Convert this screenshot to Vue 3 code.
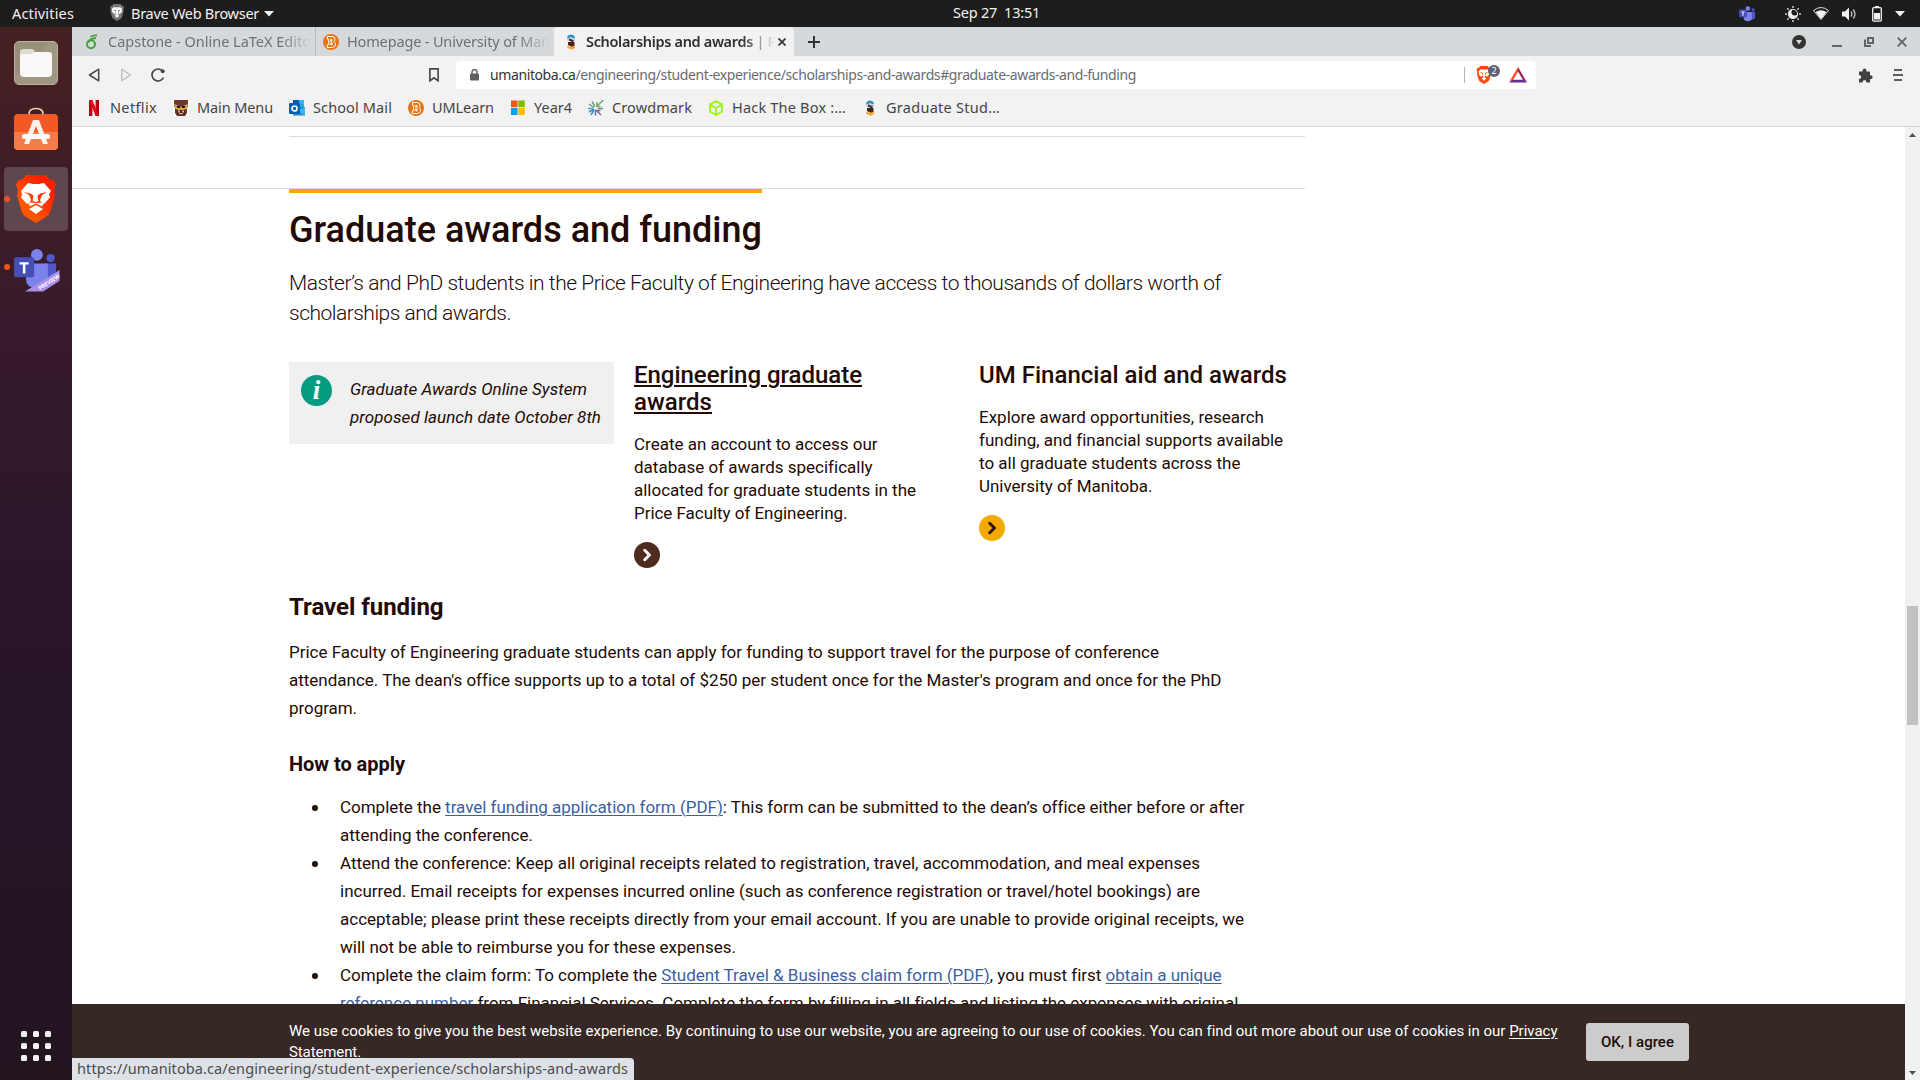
<script setup>
// Spreads a line's letters so that it takes up the given width in pixels.
const vFit = {
  mounted(el, { value }) {
    const range = document.createRange()
    range.selectNodeContents(el)
    const natural = range.getBoundingClientRect().width
    const count = el.textContent.length
    el.style.letterSpacing = `${(value - natural) / count}px`
  },
}

const bookmarks = [
  { icon: 'netflix', label: 'Netflix', width: 47, gap: 16 },
  { icon: 'bison', label: 'Main Menu', width: 76, gap: 16 },
  { icon: 'outlook', label: 'School Mail', width: 79, gap: 16 },
  { icon: 'learn', label: 'UMLearn', width: 62, gap: 16 },
  { icon: 'windows', label: 'Year4', width: 38, gap: 16 },
  { icon: 'crowdmark', label: 'Crowdmark', width: 80, gap: 16 },
  { icon: 'htb', label: 'Hack The Box :…', width: 114, gap: 16 },
  { icon: 'um', label: 'Graduate Stud…', width: 114, gap: 0 },
]

const steps = [
  [
    { w: 903, parts: ['Complete the ', { a: 'travel funding application form (PDF)' }, ': This form can be submitted to the dean’s office either before or after'] },
    { w: 193, parts: ['attending the conference.'] },
  ],
  [
    { w: 860, parts: ['Attend the conference: Keep all original receipts related to registration, travel, accommodation, and meal expenses'] },
    { w: 860, parts: ['incurred. Email receipts for expenses incurred online (such as conference registration or travel/hotel bookings) are'] },
    { w: 904, parts: ['acceptable; please print these receipts directly from your email account. If you are unable to provide original receipts, we'] },
    { w: 396, parts: ['will not be able to reimburse you for these expenses.'] },
  ],
  [
    { w: 881, parts: ['Complete the claim form: To complete the ', { a: 'Student Travel & Business claim form (PDF)' }, ', you must first ', { a: 'obtain a unique' }] },
    { w: 897, parts: [{ a: 'reference number' }, ' from Financial Services. Complete the form by filling in all fields and listing the expenses with original'] },
  ],
]

const cards = [
  {
    title: [['Engineering graduate', 228], ['awards', 78]],
    active: true,
    text: [
      ['Create an account to access our', 243.500],
      ['database of awards specifically', 238],
      ['allocated for graduate students in the', 282],
      ['Price Faculty of Engineering.', 213.500],
    ],
  },
  {
    title: [['UM Financial aid and awards', 308]],
    active: false,
    text: [
      ['Explore award opportunities, research', 285],
      ['funding, and financial supports available', 303.500],
      ['to all graduate students across the', 261.500],
      ['University of Manitoba.', 173.500],
    ],
  },
]
</script>

<template>
  <div class="desktop">
    <svg class="defs" width="0" height="0">
      <symbol id="netflix" viewBox="0 0 16 16">
        <path d="M3 0h3.400v16H3zM9.600 0H13v16H9.600z" fill="#b1060f" />
        <path d="M3 0h3.400L13 16H9.600z" fill="#e50914" />
      </symbol>
      <symbol id="bison" viewBox="0 0 16 16">
        <path d="M0 0h16v16H0z" fill="#fff" />
        <path d="M1 0h14v6l-1 2v5l-2 3H4l-2-3V8L1 6z" fill="#6b3a2c" />
        <path d="M1 4l4 1.500 3 1.500 3-1.500L15 4l-1 4.500-3 1.500H5L2 8.500z" fill="#d9a648" />
        <path d="M3.500 6h3.500v2H4.500zM12.500 6H9v2h2.500z" fill="#2c1512" />
        <path d="M4 10h8v4l-2 1.500H6L4 14z" fill="#4c2018" />
        <path d="M5 10.500h2v2H5zM9 10.500h2v2H9zM6 13h4v1.200H6z" fill="#d2b98a" />
      </symbol>
      <symbol id="outlook" viewBox="0 0 16 16">
        <path d="M4 0h11v8H4z" fill="#28a8ea" />
        <path d="M4 0h6v4H4z" fill="#0358a7" /><path d="M10 0h5v4h-5z" fill="#35b8f1" />
        <path d="M4 7h12v8.500H4z" fill="#1490df" /><path d="M16 7v8.500L8 11z" fill="#35b8f1" />
        <rect y="3" width="11" height="11" rx="1" fill="#0a5fae" />
        <circle cx="5.500" cy="8.500" r="2.500" fill="none" stroke="#fff" stroke-width="1.700" />
      </symbol>
      <symbol id="learn" viewBox="0 0 16 16">
        <circle cx="8" cy="8" r="8" fill="#e87511" />
        <path d="M4.500 2.500h4.700q2.800 0 2.800 2.700 0 1.500-1 2.200 1.500.8 1.500 2.900Q12.500 13.500 9.300 13.500H4.300v-2.700H5.700V5.300H4.500zM7.700 5.300v2h1.200v-2zM7.700 8.900v2h1.500v-2z" fill="none" stroke="#fff" stroke-width="1" />
      </symbol>
      <symbol id="windows" viewBox="0 0 16 16">
        <path d="M1 .5h6.500v6.700H1z" fill="#f65314" /><path d="M8.200.5h6.600v6.700H8.200z" fill="#7cbb00" />
        <path d="M1 8h6.500v7H1z" fill="#00a1f1" /><path d="M8.200 8h6.600v7H8.200z" fill="#ffbb00" />
      </symbol>
      <symbol id="crowdmark" viewBox="0 0 16 16">
        <g fill="none" stroke-width="1.500">
          <path d="M8.500 6.500L15.500 0M9 2v4.500h3.500" stroke="#76ad5b" />
          <path d="M4 1.500l3 5M1 4l5 3.500M0 8.500h5" stroke="#6c9c96" />
          <path d="M1 12l5-3M3 15l3-5" stroke="#2e96c0" />
          <path d="M7.500 15.500v-5h5M9 11l4 4" stroke="#7961a6" />
          <path d="M10 8.500h5" stroke="#6a8c8a" />
        </g>
      </symbol>
      <symbol id="htb" viewBox="0 0 16 16">
        <path d="M8 1l6 3.400v7.200L8 15l-6-3.400V4.400zM2 4.500L8 8l6-3.500M8 8v7" fill="none" stroke="#a4f120" stroke-width="1.900" stroke-linejoin="round" />
      </symbol>
      <symbol id="um" viewBox="0 0 16 16">
        <path d="M4 3Q5 .5 8 .5T12 3L11 5H5z" fill="#2a8fc7" />
        <path d="M4 4.500L8 3l4 1.500v2l-4 1-4-1z" fill="#b8cfdc" /><path d="M6 4.500l5 2-1 2-4-2z" fill="#4b2a20" />
        <path d="M5 8h6.500v4L9 13l-4-2z" fill="#432419" /><path d="M4 11.500l4 1.500 4-1.500v2.500l-3 1.800L4.500 14z" fill="#f5a52d" />
      </symbol>
      <symbol id="teams" viewBox="0 0 48 46">
        <circle cx="40" cy="11" r="4.500" fill="#5059c9" /><circle cx="25" cy="7.500" r="6.500" fill="#7b83eb" />
        <path d="M33 17h13v14q0 8-8 8h-5z" fill="#5059c9" /><path d="M13 17h24v17q0 10-12 10T13 34z" fill="#7b83eb" />
        <rect y="10" width="22" height="22" rx="2" fill="#464eb8" />
        <path d="M6 15.500h10v2.500h-3.600v10H9.600V18H6z" fill="#fff" />
      </symbol>
      <symbol id="lion" viewBox="0 0 40 48">
        <path d="M10 0h20l4 5 3-.5 3 5-2 6 1 5-5 17q-1 3-4 4.500L20 48l-10-6q-3-1.500-4-4.500l-5-17 1-5-2-6 3-5 3 .5z" fill="currentColor" />
        <path d="M5 15l6-6.500 5 1 4-.5 4 .5 5-1 6 6.500-1.500 4 .5 3-6 6.500-2 1L20 31l-6-1.500-2-1L6 22l.5-3z" fill="#fff" />
        <path d="M8 16l8 1 1.500 2v5l-2.500 2.500 5 3.500 5-3.500-2.500-2.500v-5l1.500-2 8-1-6 3.500-1.500-.5v6l3.500 4-6-.5h-4l-6 .5 3.500-4v-6l-1.500.5z" fill="currentColor" />
        <path d="M13.500 33.500L20 30l6.500 3.500L20 39z" fill="#fff" />
        <path d="M18 18h4v5l1.500 3L20 28l-3.500-2 1.500-3z" fill="#fff" />
      </symbol>
      <linearGradient id="flame" x1="0" x2="1" y1="1" y2="0"><stop offset=".3" stop-color="#ff5500" /><stop offset=".75" stop-color="#ff2000" /></linearGradient>
    </svg>

    <header class="topbar">
      <span class="activities" v-fit="62">Activities</span>
      <svg class="top-lion" width="14" height="17"><use href="#lion" /></svg>
      <span class="app-name" v-fit="128">Brave Web Browser</span>
      <svg class="top-caret" width="10" height="6"><path d="M0 0h10L5 5.500z" fill="#f2f2f2" /></svg>
      <span class="clock" v-fit="87">Sep 27&nbsp; 13:51</span>
      <div class="tray">
        <svg class="t-teams" width="17" height="16"><use href="#teams" /></svg>
        <svg class="t-sun" width="16" height="16" viewBox="0 0 16 16">
          <path d="M8 0v2M8 14v2M0 8h2M14 8h2M2.300 2.300l1.400 1.400M12.300 12.300l1.400 1.400M2.300 13.700l1.400-1.400M12.300 3.700l1.400-1.400" stroke="#d0d0d0" stroke-width="1.500" />
          <circle cx="8" cy="8" r="5" fill="#f2f2f2" /><circle cx="9.800" cy="6.300" r="3.300" fill="#1d1d1d" />
          <circle cx="8" cy="8" r="4.600" fill="none" stroke="#e0e0e0" />
        </svg>
        <svg class="t-wifi" width="16" height="13" viewBox="0 0 16 13">
          <path d="M.5 3.500Q8-2.500 15.500 3.500L8 12.500z" fill="none" stroke="#f2f2f2" stroke-width=".9" />
          <path d="M2.500 5Q8 1.500 13.500 5L8 12z" fill="#f2f2f2" />
        </svg>
        <svg class="t-vol" width="15" height="14" viewBox="0 0 15 14">
          <path d="M0 4.500h3L7 .5v13L3 9.500H0z" fill="#f2f2f2" />
          <path d="M9 4.500q1.800 2.500 0 5M11.300 2.500q3.400 4.500 0 9" fill="none" stroke="#c8c8c8" stroke-width="1.300" />
        </svg>
        <svg class="t-bat" width="10" height="16" viewBox="0 0 10 16">
          <path d="M3 0h4v2H3z" fill="#f2f2f2" /><rect x=".7" y="1.700" width="8.600" height="13.400" rx="1" fill="none" stroke="#f2f2f2" stroke-width="1.300" />
          <path d="M2 7h6v6.500H2z" fill="#f2f2f2" />
        </svg>
        <svg width="10" height="6"><path d="M0 0h10L5 5.500z" fill="#f2f2f2" /></svg>
      </div>
    </header>

    <div class="workspace">
      <nav class="dock">
        <div class="dock-item">
          <svg width="44" height="44" viewBox="0 0 44 44">
            <rect x=".5" y=".5" width="43" height="43" rx="4.500" fill="#99907a" stroke="#b9b3a3" />
            <path d="M1 36L36 1h5q2 0 2 2v38q0 2-2 2H3q-2 0-2-2z" fill="#a29a86" opacity=".7" />
            <path d="M6 11q0-3 3-3h9q2 0 3 3h12v8H6z" fill="#dedacd" />
            <path d="M6 15q0-2 2-2h9l4-2h14q3 0 3 3v18q0 4-4 4H10q-4 0-4-4z" fill="#faf9f7" />
          </svg>
        </div>
        <div class="dock-item">
          <svg class="software" width="44" height="44" viewBox="0 0 44 44">
            <path d="M15 10V7q0-5.500 7-5.500T29 7v3" fill="none" stroke="#f2d7a6" stroke-width="1.700" />
            <rect y="7" width="44" height="36" rx="4" fill="#f15a24" /><path d="M0 25h44v14q0 4-4 4H4q-4 0-4-4z" fill="#f47b4c" />
            <path d="M19 13h6l9 24h-5l-7-18-7 18h-5z" fill="#fff1e9" /><rect x="8" y="27" width="28" height="5" rx="2.500" fill="#fff" />
          </svg>
        </div>
        <div class="dock-item current">
          <i class="run-dot"></i>
          <svg class="brave" width="40" height="48" viewBox="0 0 40 48">
            <path d="M10 0h20l4 5 3-.5 3 5-2 6 1 5-5 17q-1 3-4 4.500L20 48l-10-6q-3-1.500-4-4.500l-5-17 1-5-2-6 3-5 3 .5z" fill="url(#flame)" />
            <path d="M12 8l5 1h6l5-1 7 8-2 3.500 1 3-6 6.500-3-2-1-2 2-5 5-3-6.500 1.500-3 2 .8 5.500L20 27l-3.300-1 .8-5.500-3-2L8 17l5 3 2 5-1 2-3 2-6-6.500 1-3L5 16z" fill="#fff" />
            <path d="M13 34l7-4 7 4-7 5z" fill="#fff" />
            <path d="M12.500 27.500L20 28l7.500-.5-.5 3-2 .5-5-2.500-5 2.500-2-.5z" fill="#fff" />
          </svg>
        </div>
        <div class="dock-item">
          <i class="run-dot"></i>
          <svg class="teams-dock" width="46" height="44" viewBox="0 0 46 44">
            <use href="#teams" width="44" height="42" />
            <path d="M11 43.500L45.500 22v11L29 43.500z" fill="#aa8ee6" />
          </svg>
          <span class="preview">PREVIEW</span>
        </div>
        <div class="apps"><i v-for="n in 9" :key="n"></i></div>
      </nav>

      <main class="window">
        <div class="tabs">
          <div class="tab tab-one">
            <svg width="14" height="16" viewBox="0 0 14 16">
              <path d="M12 1.500Q8 1 5.500 2.800M11 4Q5 4.500 3 8.500" fill="none" stroke="#47a141" stroke-width="1.800" />
              <circle cx="6" cy="10.300" r="4" fill="none" stroke="#47a141" stroke-width="2" />
            </svg>
            <div class="tab-label fade"><span v-fit="203">Capstone - Online LaTeX Edito</span></div>
          </div>
          <div class="tab tab-two">
            <svg width="16" height="16"><use href="#learn" /></svg>
            <div class="tab-label fade"><span v-fit="203">Homepage - University of Man</span></div>
          </div>
          <div class="tab tab-active">
            <svg width="16" height="16"><use href="#um" /></svg>
            <div class="tab-label fade-strong"><span v-fit="189">Scholarships and awards | F</span></div>
            <svg class="tab-x" width="8" height="8"><path d="M.5.5l7 7M7.500.5l-7 7" stroke="#333" stroke-width="1.700" /></svg>
          </div>
          <svg class="plus" width="12" height="12"><path d="M6 0v12M0 6h12" stroke="#333" stroke-width="2" /></svg>
          <div class="controls">
            <svg width="14" height="14"><circle cx="7" cy="7" r="7" fill="#333" /><path d="M4 5h6L7 9.500z" fill="#d5d9dc" /></svg>
            <svg class="c-min" width="10" height="14"><path d="M0 11h10" stroke="#606468" stroke-width="2" /></svg>
            <svg class="c-max" width="10" height="14"><path d="M4 3h5v5H4zM1 4.500V11h6" fill="none" stroke="#606468" stroke-width="2" /></svg>
            <svg class="c-close" width="10" height="14"><path d="M.7 2.700l8.600 8.600M9.300 2.700L.7 11.300" stroke="#606468" stroke-width="1.800" /></svg>
          </div>
        </div>

        <div class="toolbar">
          <svg class="back" width="12" height="14"><path d="M10.700 1.200v11.600L1.500 7z" fill="none" stroke="#484848" stroke-width="1.500" stroke-linejoin="round" /></svg>
          <svg class="fwd" width="12" height="14"><path d="M1.800 1.200v11.600L10.500 7z" fill="none" stroke="#bcbcbc" stroke-width="1.300" stroke-linejoin="round" /></svg>
          <svg class="reload" width="14" height="14"><path d="M12.500 9.500A6 6 0 1 1 11.500 3" fill="none" stroke="#484848" stroke-width="1.700" /><circle cx="11.700" cy="3.300" r="2" fill="#484848" /></svg>
          <svg class="mark" width="10" height="14"><path d="M.9.900h8.200v11.900L5 9.800.9 12.800z" fill="none" stroke="#444" stroke-width="1.600" /></svg>
          <div class="address">
            <svg width="9" height="12"><rect y="4.500" width="9" height="7" rx="1" fill="#5c5f63" /><path d="M2 5V3a2.500 2.500 0 0 1 5 0v2" fill="none" stroke="#5c5f63" stroke-width="1.400" /></svg>
            <span class="url" v-fit="646"><b>umanitoba.ca</b>/engineering/student-experience/scholarships-and-awards#graduate-awards-and-funding</span>
            <i class="bar"></i>
            <div class="shield"><svg width="16" height="18"><use href="#lion" /></svg><em>2</em></div>
            <svg class="bat" width="18" height="16" viewBox="0 0 18 16">
              <path d="M9 0L0 15.500 4 13 9 4.500z" fill="#ff4724" /><path d="M9 0l9 15.500-4-2.500-5-8.500z" fill="#9e1f63" /><path d="M0 15.500h18L14 12.800H4z" fill="#662d91" />
            </svg>
          </div>
          <svg class="ext" width="15" height="15" viewBox="0 0 15 15"><path d="M1 3.500h3.500Q4.500.5 6.500.5T8.500 3.500H12v3.800q2.700 0 2.700 2T12 11.300V14.500H8.500q0-2.500-2-2.500t-2 2.500H1V11q2.300 0 2.300-2T1 7z" fill="#404040" /></svg>
          <svg class="menu" width="10" height="12"><path d="M1 1h8M0 6h10M1 11h8" stroke="#5c5c5c" stroke-width="1.800" /></svg>
        </div>

        <div class="bookmarks">
          <div v-for="b in bookmarks" :key="b.label" class="bookmark" :style="{ marginRight: b.gap + 'px' }">
            <svg width="16" height="16"><use :href="'#' + b.icon" /></svg>
            <span :style="{ width: b.width + 'px' }"><span v-fit="b.width">{{ b.label }}</span></span>
          </div>
        </div>

        <div class="viewport">
          <div class="page">
            <div class="rule-top"></div>
            <div class="rule-full"></div>
            <article>
              <h1><span v-fit="473">Graduate awards and funding</span></h1>
              <p class="intro">
                <span class="line" v-fit="932">Master’s and PhD students in the Price Faculty of Engineering have access to thousands of dollars worth of</span>
                <span class="line" v-fit="222">scholarships and awards.</span>
              </p>
              <div class="columns">
                <aside class="notice">
                  <i class="info">i</i>
                  <div>
                    <span class="line" v-fit="237">Graduate Awards Online System</span>
                    <span class="line" v-fit="251">proposed launch date October 8th</span>
                  </div>
                </aside>
                <section v-for="(card, i) in cards" :key="i" class="card" :class="{ active: card.active }">
                  <h3><span v-for="t in card.title" :key="t[0]" class="line" v-fit="t[1]">{{ t[0] }}</span></h3>
                  <p><span v-for="t in card.text" :key="t[0]" class="line" v-fit="t[1]">{{ t[0] }}</span></p>
                  <div class="go"><svg width="26" height="26"><path d="M10.700 8.300l4.800 4.700-4.800 4.700" fill="none" stroke="currentColor" stroke-width="3" stroke-linecap="round" stroke-linejoin="round" /></svg></div>
                </section>
              </div>
              <h2><span v-fit="154.500">Travel funding</span></h2>
              <p class="body">
                <span class="line" v-fit="870">Price Faculty of Engineering graduate students can apply for funding to support travel for the purpose of conference</span>
                <span class="line" v-fit="931">attendance. The dean's office supports up to a total of $250 per student once for the Master's program and once for the PhD</span>
                <span class="line" v-fit="68">program.</span>
              </p>
              <h4><span v-fit="116">How to apply</span></h4>
              <ul>
                <li v-for="(step, s) in steps" :key="s">
                  <span v-for="(l, k) in step" :key="k" class="line" v-fit="l.w"><template v-for="(part, j) in l.parts" :key="j"><a v-if="part.a">{{ part.a }}</a><template v-else>{{ part }}</template></template></span>
                </li>
              </ul>
            </article>
          </div>
          <div class="scrollbar">
            <svg width="7" height="4"><path d="M0 4l3.500-4L7 4z" fill="#505050" /></svg>
            <i class="thumb"></i>
            <svg class="down" width="7" height="4"><path d="M0 0h7L3.500 4z" fill="#505050" /></svg>
          </div>
          <div class="cookies">
            <p>
              <span class="line" v-fit="1268">We use cookies to give you the best website experience. By continuing to use our website, you are agreeing to our use of cookies. You can find out more about our use of cookies in our <u>Privacy</u></span>
              <span class="line" v-fit="72"><u>Statement</u>.</span>
            </p>
            <button><span v-fit="73">OK, I agree</span></button>
          </div>
          <div class="status"><span v-fit="551">https://umanitoba.ca/engineering/student-experience/scholarships-and-awards</span></div>
        </div>
      </main>
    </div>
  </div>
</template>

<style>
body { overflow: hidden; }
</style>

<style scoped>
* { box-sizing: border-box; }
svg { display: block; flex: none; }
.defs { position: absolute; }
.desktop { width: 1920px; height: 1080px; display: flex; flex-direction: column; overflow: hidden; font: 14.5px/20px "Noto Sans", sans-serif; background: #fff; }
.line { display: block; width: max-content; white-space: nowrap; }

.topbar { position: relative; height: 27px; flex: none; display: flex; align-items: center; background: #1d1d1d; color: #f2f2f2; white-space: nowrap; }
.activities, .app-name { padding-bottom: 2px; }
.activities { margin-left: 12px; width: 98px; }
.top-lion { color: #777; margin-right: 7px; margin-top: -2px; }
.top-caret { margin-left: 5px; }
.clock { position: absolute; left: 953px; top: 2px; }
.tray { margin-left: auto; padding-right: 15px; display: flex; align-items: center; }
.t-teams { margin-right: 29px; }
.t-sun { margin-right: 12px; }
.t-wifi { margin-right: 13px; }
.t-vol { margin-right: 15px; }
.t-bat { margin-right: 13px; }

.workspace { flex: 1; display: flex; min-height: 0; }
.dock { width: 72px; flex: none; display: flex; flex-direction: column; align-items: center; padding-top: 4px; background: linear-gradient(#472022, #371a2b 28%, #28152a 60%, #21141f); }
.dock-item { position: relative; width: 64px; height: 64px; margin-bottom: 4px; border-radius: 4px; display: flex; align-items: center; justify-content: center; }
.dock-item.current { background: #5f464f; }
.run-dot { position: absolute; left: 0; top: 29px; width: 6px; height: 6px; border-radius: 50%; background: #e95420; }
.software { margin-top: -5px; }
.teams-dock { margin-left: 2px; margin-top: 5px; }
.preview { position: absolute; left: 29px; top: 43px; width: 32px; font: 700 5.5px/8px "Noto Sans", sans-serif; color: #fff; transform: rotate(-33deg); text-align: center; }
.apps { margin-top: auto; margin-bottom: 19px; display: grid; grid-template-columns: repeat(3, 6px); gap: 6px; }
.apps i { width: 6px; height: 6px; border-radius: 1.5px; background: #f4f2f3; }

.window { flex: 1; display: flex; flex-direction: column; min-width: 0; background: #f2f2f2; }
.tabs { height: 29px; display: flex; align-items: center; background: #d5d9dc; color: #6d7073; }
.tab { display: flex; align-items: center; height: 29px; white-space: nowrap; }
.tab-label { overflow: hidden; padding-bottom: 1px; }
.fade { -webkit-mask-image: linear-gradient(90deg, #000 85%, transparent); }
.fade-strong { -webkit-mask-image: linear-gradient(90deg, #000 82%, transparent); }
.tab-one { width: 244px; padding-left: 13px; gap: 9px; border-right: 1px solid #b6babd; }
.tab-one .tab-label, .tab-two .tab-label { width: 203px; }
.tab-two { width: 238px; padding-left: 7px; gap: 8px; }
.tab-active { width: 240px; padding-left: 9px; background: #f2f2f2; border-radius: 4px 4px 0 0; color: #2e2e2e; font-weight: 600; }
.tab-active .tab-label { width: 189px; margin: 0 3px 0 7px; }
.plus { margin-left: 14px; }
.controls { margin-left: auto; margin-right: 13px; display: flex; align-items: center; }
.c-min { margin-left: 26px; }
.c-max { margin-left: 22px; }
.c-close { margin-left: 23px; }

.toolbar { height: 38px; display: flex; align-items: center; }
.back { margin-left: 16px; }
.fwd { margin-left: 20px; }
.reload { margin-left: 19px; }
.mark { margin-left: 264px; margin-right: 17px; }
.address { width: 1080px; height: 28px; padding-left: 14px; display: flex; align-items: center; border-radius: 4px; background: #fff; color: #696c70; }
.url { margin-left: 11px; white-space: nowrap; font-size: 14px; }
.url b { font-weight: 400; color: #333; }
.bar { width: 1px; height: 16px; margin-left: auto; background: #b3b7bb; }
.shield { position: relative; margin-left: 11px; color: #fb4a0c; width: 33px; }
.shield em { position: absolute; left: 12px; top: -1px; width: 12px; height: 12px; border-radius: 6px; background: #5e6175; color: #fff; font: 9px/12px "Noto Sans", sans-serif; text-align: center; }
.bat { margin-right: 9px; }
.ext { margin-left: 322px; }
.menu { margin-left: 20px; }

.bookmarks { height: 33px; padding: 0 0 5px 14px; border-bottom: 1px solid #d4d4d4; display: flex; align-items: center; color: #454545; }
.bookmark { display: flex; align-items: center; gap: 8px; white-space: nowrap; }
.bookmark > span { display: block; padding-bottom: 1px; }

.viewport { position: relative; flex: 1; display: flex; min-height: 0; background: #fff; font-family: Roboto, sans-serif; color: #230a04; }
.page { flex: 1; overflow: hidden; }
.rule-top { margin: 9px 0 0 217px; width: 1016px; height: 1px; background: #dcdcdc; }
.rule-full { margin-top: 51px; width: 1233px; height: 1px; background: #dcdcdc; }
article { margin-left: 217px; width: 1040px; }
h1, h2, h3, h4, p, ul { margin: 0; }
h1 { width: 473px; padding-top: 16px; border-top: 4px solid #f5a800; font-size: 36px; line-height: 42px; font-weight: 500; white-space: nowrap; }
.intro { margin-top: 17px; font-size: 21px; line-height: 30px; font-weight: 300; }
.columns { margin-top: 34px; display: flex; align-items: flex-start; }
.notice { width: 325px; height: 82px; padding: 13px 0 0 12px; display: flex; background: #f0f0f0; font-size: 17px; line-height: 28px; font-style: italic; }
.info { width: 31px; height: 31px; margin-right: 18px; border-radius: 50%; background: #049b81; color: #fff; font: italic 700 27px/30px "Liberation Serif", serif; text-align: center; }
.card { width: 325px; margin-left: 20px; }
h3 { font-size: 24px; line-height: 27px; font-weight: 500; }
.active h3 .line { text-decoration: underline; text-decoration-thickness: 2px; text-underline-offset: 2px; }
.card p { margin-top: 17px; font-size: 17px; line-height: 23px; }
.go { width: 26px; height: 26px; margin-top: 16.5px; border-radius: 50%; background: #f2a900; color: #35150c; }
.active .go { background: #4f2a1e; color: #fff; }
h2 { margin-top: 25.5px; font-size: 24px; line-height: 28px; font-weight: 700; }
.body { margin-top: 17px; font-size: 17px; line-height: 28px; }
h4 { margin-top: 30px; font-size: 20px; line-height: 24px; font-weight: 700; }
ul { margin-top: 17px; padding-left: 51px; font-size: 17px; line-height: 28px; list-style: none; }
li { position: relative; }
li::before { content: ""; position: absolute; left: -28px; top: 12px; width: 6px; height: 6px; border-radius: 50%; background: #230a04; }
a { color: #3b5fa0; text-decoration: underline; text-underline-offset: 2px; text-decoration-thickness: 1px; }

.scrollbar { width: 15px; flex: none; padding: 6px 0 5px; display: flex; flex-direction: column; align-items: center; background: #f1f1f1; }
.thumb { width: 11px; height: 119px; margin-top: 469px; background: #c1c1c1; }
.down { margin-top: auto; }
.cookies { position: absolute; left: 0; right: 15px; bottom: 0; height: 76px; padding: 17px 0 0 217px; display: flex; align-items: flex-start; background: #352825; color: #fff; font-size: 15px; line-height: 21px; }
.cookies p { width: 1297px; }
u { text-underline-offset: 2px; }
.cookies button { width: 103px; height: 38px; margin-top: 2px; padding: 0; border: 0; border-radius: 3px; background: #ccc; color: #230a04; font: 500 15px/38px Roboto, sans-serif; white-space: nowrap; }
.status { position: absolute; left: 0; bottom: 0; width: 562px; height: 22px; padding-left: 5px; border-top-right-radius: 4px; background: #dee1e6; color: #4a4c50; font: 14.5px/21px "Noto Sans", sans-serif; white-space: nowrap; }
</style>
